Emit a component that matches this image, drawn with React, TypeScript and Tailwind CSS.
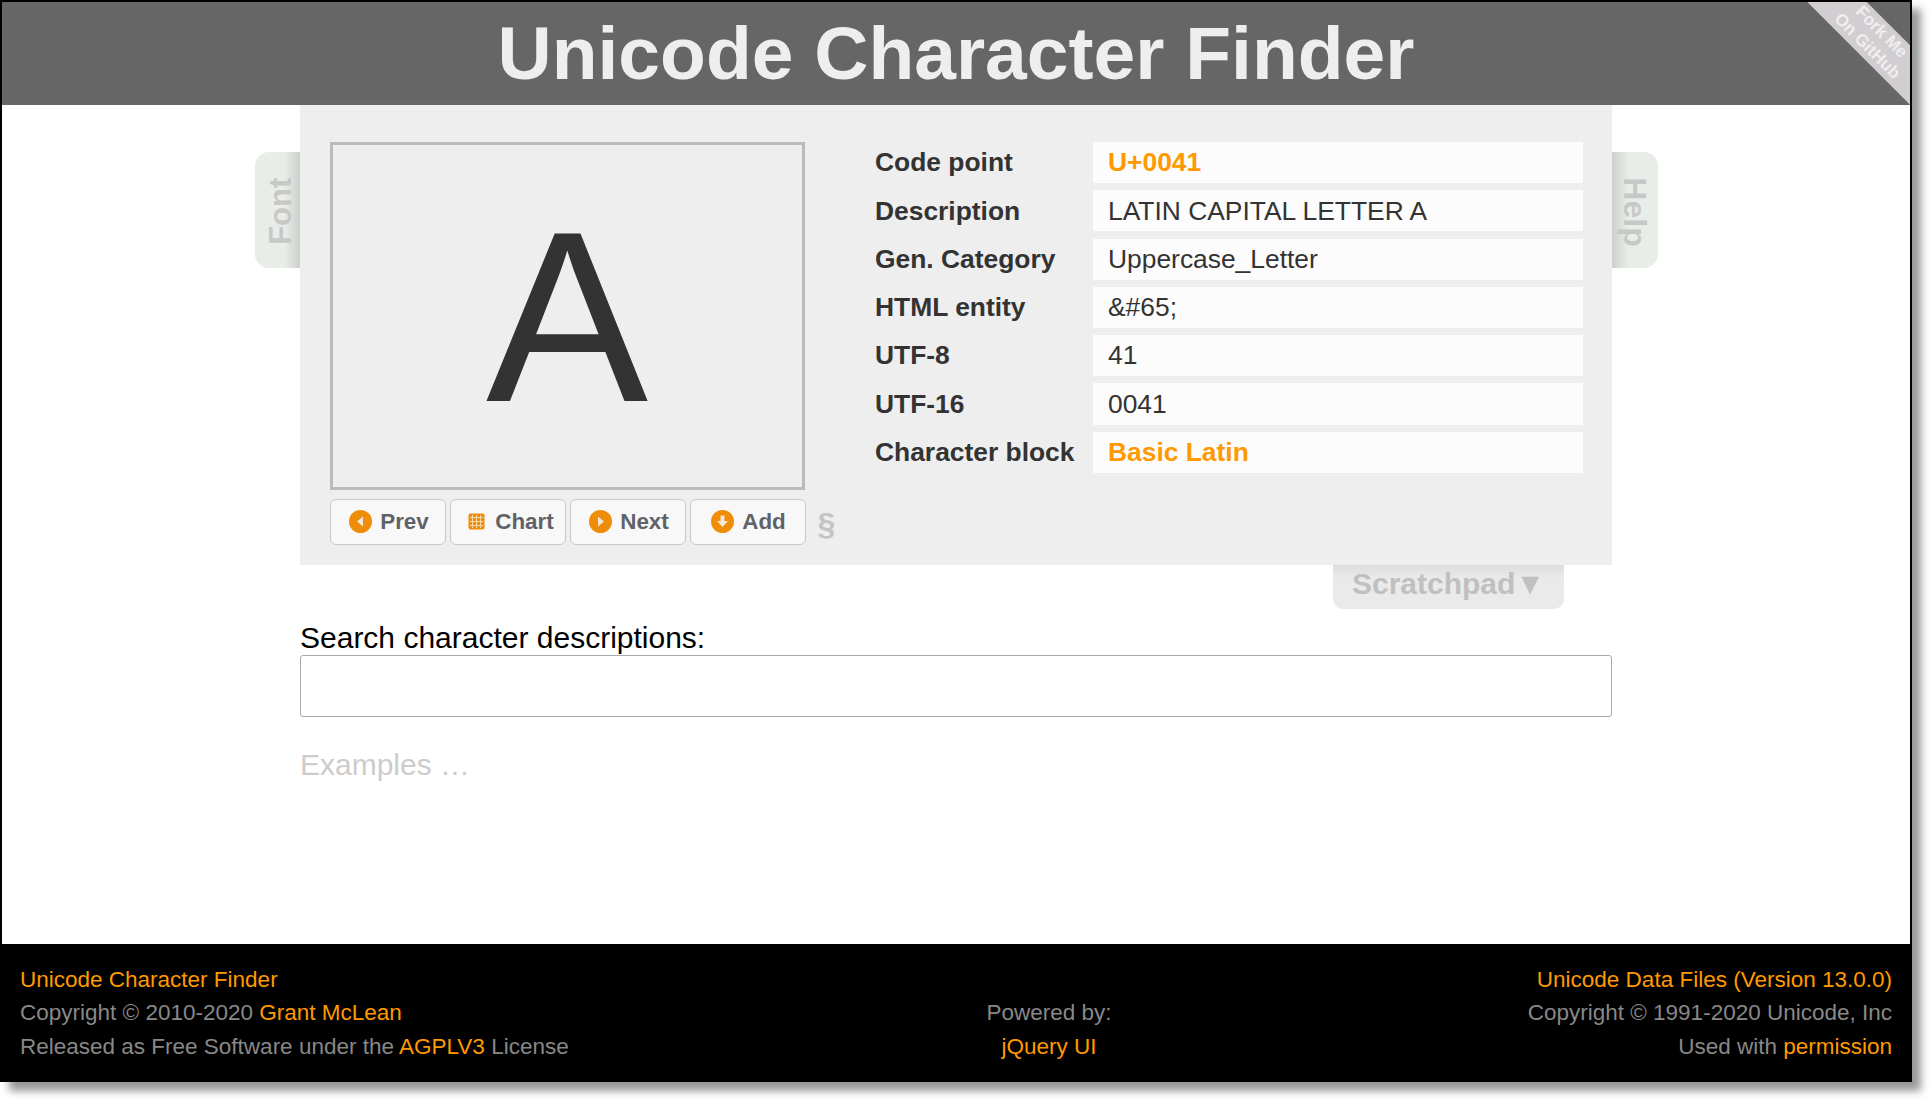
const sans = { fontFamily: '"Liberation Sans", Arial, sans-serif' };

const rows = [
  { label: 'Code point', value: 'U+0041', link: true },
  { label: 'Description', value: 'LATIN CAPITAL LETTER A' },
  { label: 'Gen. Category', value: 'Uppercase_Letter' },
  { label: 'HTML entity', value: '&#65;' },
  { label: 'UTF-8', value: '41' },
  { label: 'UTF-16', value: '0041' },
  { label: 'Character block', value: 'Basic Latin', link: true },
];

function CircleIcon({ kind }: { kind: 'prev' | 'next' | 'add' }) {
  return (
    <svg width="23" height="23" viewBox="0 0 23 23" className="mb-[2px] shrink-0">
      <circle cx="11.5" cy="11.5" r="11.5" fill="#ef8c08" />
      {kind === 'prev' && <path d="M14 6.5v10l-6-5z" fill="#f6e8d8" />}
      {kind === 'next' && <path d="M9 6.5v10l6-5z" fill="#f6e8d8" />}
      {kind === 'add' && <path d="M9.5 5.5h4v5.500h3.500l-5.500 6-5.500-6h3.500z" fill="#f6e8d8" />}
    </svg>
  );
}

function ChartIcon() {
  return (
    <svg width="17" height="17" viewBox="0 0 17 17" className="mb-[2px] shrink-0">
      <rect x="0.500" y="0.500" width="16" height="16" rx="2" fill="#ef8c08" />
      <path d="M4.500 2v13M8.500 2v13M12.500 2v13M2 4.500h13M2 8.500h13M2 12.500h13" stroke="#f8d8a8" strokeWidth="1" />
    </svg>
  );
}

function NavButton({ label, icon, cls }: { label: string; icon: React.ReactNode; cls: string }) {
  return (
    <button className={`flex h-[46px] w-[116px] shrink-0 items-center justify-center rounded-[6px] border border-[#c8c8c8] bg-[#f8f8f8] text-[22.400px] font-bold text-[#5f6368] ${cls}`}>
      {icon}
      <span>{label}</span>
    </button>
  );
}

export default function App() {
  return (
    <div className="h-[1102px] w-[1932px] overflow-hidden bg-white" style={sans}>
      <div className="relative flex h-[1082px] w-[1912px] flex-col overflow-hidden border-x-2 border-t-2 border-black bg-white shadow-[9px_9px_8px_#999]">
        {/* Header */}
        <header className="relative h-[103px] shrink-0 overflow-hidden bg-[#666] text-center">
          <h1 className="text-[75px] font-bold leading-[103px] text-[#eee]">Unicode Character Finder</h1>
          <div className="absolute right-[-70px] top-[2px] flex h-[42px] w-[240px] rotate-45 flex-col items-center justify-center bg-[#d1cdd1] pl-[40px] text-[17px] font-bold leading-[20px] text-[#eee]">
            <span>Fork Me</span>
            <span>On GitHub</span>
          </div>
        </header>

        {/* Main */}
        <main className="flex-1">
          <div className="flex justify-center">
            <div className="mt-[47px] flex h-[116px] w-[45px] items-center justify-center rounded-l-[14px] bg-[linear-gradient(to_right,#e8ede8_65%,#ccd1cc)] pl-[10px] pt-[3px]">
              <span className="-rotate-90 text-[31px] font-bold text-[#c8c8c8]">Font</span>
            </div>
            <section className="flex h-[460px] w-[1312px] bg-[#eee] pl-[30px] pt-[37px]">
              <div className="w-[475px] shrink-0">
                <div className="flex h-[348px] w-[475px] items-center justify-center border-[3px] border-[#bbb] text-[243px] leading-none text-[#333]">
                  A
                </div>
                <div className="mt-[9px] flex items-center gap-1">
                  <NavButton label="Prev" cls="gap-[8px] pl-[3px]" icon={<CircleIcon kind="prev" />} />
                  <NavButton label="Chart" cls="gap-[10px] pl-[7px]" icon={<ChartIcon />} />
                  <NavButton label="Next" cls="gap-[8px] pl-[3px]" icon={<CircleIcon kind="next" />} />
                  <NavButton label="Add" cls="gap-[8px] pl-[2px]" icon={<CircleIcon kind="add" />} />
                  <span className="ml-2 mt-[3px] text-[32px] font-bold leading-none text-[#c4c4c4]">§</span>
                </div>
              </div>
              <div className="ml-[70.500px] flex flex-col gap-[7.100px]">
                {rows.map((row) => (
                  <div key={row.label} className="flex h-[41.200px] items-center">
                    <div className="w-[217.500px] pt-[1px] text-[26.400px] font-bold text-[#333]">{row.label}</div>
                    <div
                      className={`flex h-[41.200px] w-[490px] items-center bg-[#fcfcfc] pl-[15.500px] pt-[1px] text-[26.400px] ${
                        row.link ? 'font-bold text-[#ff9900]' : 'text-[#333]'
                      }`}
                    >
                      {row.value}
                    </div>
                  </div>
                ))}
              </div>
            </section>
            <div className="mt-[47px] flex h-[116px] w-[46px] items-center justify-center rounded-r-[14px] bg-[linear-gradient(to_left,#e8ede8_65%,#ccd1cc)] pt-[3px]">
              <span className="rotate-90 text-[32px] font-bold text-[#c8c8c8]">Help</span>
            </div>
          </div>

          <div className="mx-auto w-[1312px]">
            <div className="flex justify-end pr-[48px]">
              <div className="flex h-[44px] w-[231px] items-start justify-center rounded-b-[10px] bg-[linear-gradient(to_bottom,#ddd,#eaeaea_30%)] text-[30px] font-bold leading-[38px] text-[#c0c0c0]">
                <span>Scratchpad</span>
                <span>▼</span>
              </div>
            </div>
            <label className="mt-[11px] block text-[30px] leading-[36px] text-black">Search character descriptions:</label>
            <input className="-mt-px block h-[62px] w-full rounded-[3px] border border-[#aaa] bg-white" />
            <p className="mt-[30px] text-[30px] leading-[36px] text-[#ccc]">Examples …</p>
          </div>
        </main>

        {/* Footer */}
        <footer className="flex h-[138px] shrink-0 items-start bg-black px-[18px] pt-[19px] text-[22.500px] leading-[33.300px] text-[#888]">
          <div className="w-[965px]">
            <div><a className="text-[#ff9900]">Unicode Character Finder</a></div>
            <div>Copyright © 2010-2020 <a className="text-[#ff9900]">Grant McLean</a></div>
            <div>Released as Free Software under the <a className="text-[#ff9900]">AGPLV3</a> License</div>
          </div>
          <div className="w-[128px] pt-[33.300px] text-center">
            <div>Powered by:</div>
            <div><a className="text-[#ff9900]">jQuery UI</a></div>
          </div>
          <div className="flex-1 text-right">
            <div><a className="text-[#ff9900]">Unicode Data Files (Version 13.0.0)</a></div>
            <div>Copyright © 1991-2020 Unicode, Inc</div>
            <div>Used with <a className="text-[#ff9900]">permission</a></div>
          </div>
        </footer>
      </div>
    </div>
  );
}
